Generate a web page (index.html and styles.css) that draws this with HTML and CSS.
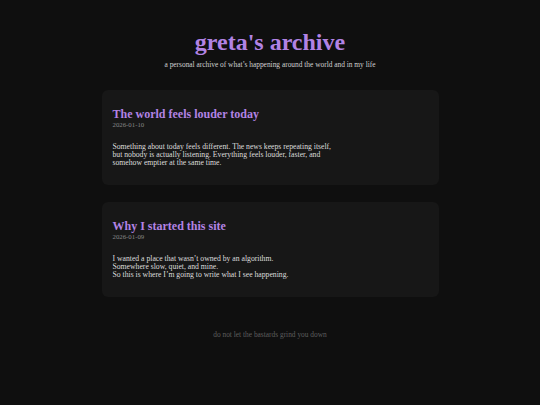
FILE: index.html
```html
<!DOCTYPE html>
<html>
<head>
<meta charset="utf-8">
<link rel="stylesheet" href="styles.css">
</head>
<body>
<header class="site-header">
  <h1 class="site-title">greta's archive</h1>
  <p class="site-tagline">a personal archive of what’s happening around the world and in my life</p>
</header>
<main class="posts">
  <article class="post">
    <h2 class="post-title">The world feels louder today</h2>
    <div class="post-date">2026-01-10</div>
    <p class="post-body">Something about today feels different. The news keeps repeating itself,<br>but nobody is actually listening. Everything feels louder, faster, and<br>somehow emptier at the same time.</p>
  </article>
  <article class="post">
    <h2 class="post-title">Why I started this site</h2>
    <div class="post-date">2026-01-09</div>
    <p class="post-body">I wanted a place that wasn’t owned by an algorithm.<br>Somewhere slow, quiet, and mine.<br>So this is where I’m going to write what I see happening.</p>
  </article>
</main>
<footer class="site-footer">do not let the bastards grind you down</footer>
</body>
</html>
```
FILE: styles.css
```css
html, body {
  margin: 0;
  padding: 0;
  background: #0f0f0f;
}
body {
  font-family: Georgia, "Liberation Serif", serif;
  color: #dcdcdc;
  width: 540px;
  height: 405px;
  overflow: hidden;
}
.site-header {
  text-align: center;
  padding-top: 28px;
}
.site-title {
  margin: 0;
  font-size: 24px;
  line-height: 28px;
  font-weight: bold;
  color: #b283e4;
}
.site-tagline {
  margin: 5px 0 0;
  font-size: 7.4px;
  line-height: 8px;
  color: #d0d0d0;
}
.posts {
  width: 337px;
  margin: 21px auto 0;
  display: flex;
  flex-direction: column;
  gap: 17px;
}
.post {
  background: #171717;
  border-radius: 6px;
  padding: 17px 11px 0;
  height: 78px;
}
.post-title {
  margin: 0;
  font-size: 12px;
  line-height: 14px;
  font-weight: bold;
  color: #b283e4;
}
.post-date {
  margin-top: 0;
  font-size: 6.8px;
  line-height: 8px;
  color: #888888;
}
.post-body {
  margin: 14px 0 0;
  font-size: 7.7px;
  line-height: 8px;
  color: #dddddd;
}
.site-footer {
  text-align: center;
  margin-top: 34px;
  font-size: 7.4px;
  line-height: 8px;
  color: #5e5e5e;
}
```
